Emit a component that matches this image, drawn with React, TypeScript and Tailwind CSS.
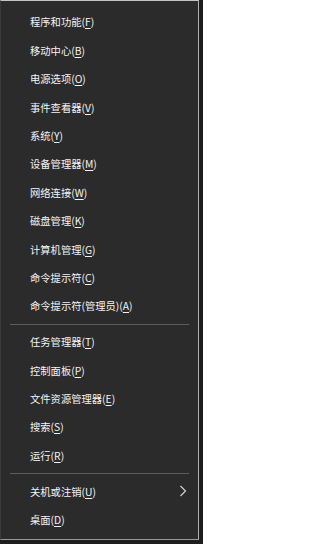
import React from "react";

type Item = { label: string; key: string; sub?: boolean };

const group1: Item[] = [
  { label: "程序和功能", key: "F" },
  { label: "移动中心", key: "B" },
  { label: "电源选项", key: "O" },
  { label: "事件查看器", key: "V" },
  { label: "系统", key: "Y" },
  { label: "设备管理器", key: "M" },
  { label: "网络连接", key: "W" },
  { label: "磁盘管理", key: "K" },
  { label: "计算机管理", key: "G" },
  { label: "命令提示符", key: "C" },
  { label: "命令提示符(管理员)", key: "A" },
];
const group2: Item[] = [
  { label: "任务管理器", key: "T" },
  { label: "控制面板", key: "P" },
  { label: "文件资源管理器", key: "E" },
  { label: "搜索", key: "S" },
  { label: "运行", key: "R" },
];
const group3: Item[] = [
  { label: "关机或注销", key: "U", sub: true },
  { label: "桌面", key: "D" },
];

function Row({ item }: { item: Item }) {
  return (
    <div className="h-[28.4px] flex items-center pl-[29px] pr-[11px] text-[10.3px] text-[#f4f4f4] whitespace-nowrap">
      <span className="flex-1">
        {item.label}(<span className="underline underline-offset-2">{item.key}</span>)
      </span>
      {item.sub && (
        <svg width="8" height="12" viewBox="0 0 8 12" className="shrink-0">
          <polyline points="1.5,1 6.5,6 1.5,11" fill="none" stroke="#d0d0d0" strokeWidth="1.2" />
        </svg>
      )}
    </div>
  );
}

function Divider() {
  return (
    <div className="h-[7.5px] flex items-center px-[9px]">
      <div className="h-px w-full bg-[#5c5c5c]" />
    </div>
  );
}

export default function App() {
  return (
    <div
      className="w-[203px] h-[544px] bg-[#1e1e1e] overflow-hidden"
      style={{ fontFamily: '"Noto Sans CJK SC", "Noto Sans", sans-serif' }}
    >
      <div className="w-[199px] h-[540px] bg-[#2b2b2b] border-t border-t-[#c4c4c4] border-r border-r-[#b0b0b0] border-b border-b-[#9a9a9a] border-l border-l-[#3a3a3a] pt-[7px] flex flex-col">
        {group1.map((it) => (
          <Row key={it.label} item={it} />
        ))}
        <Divider />
        {group2.map((it) => (
          <Row key={it.label} item={it} />
        ))}
        <Divider />
        {group3.map((it) => (
          <Row key={it.label} item={it} />
        ))}
      </div>
    </div>
  );
}
